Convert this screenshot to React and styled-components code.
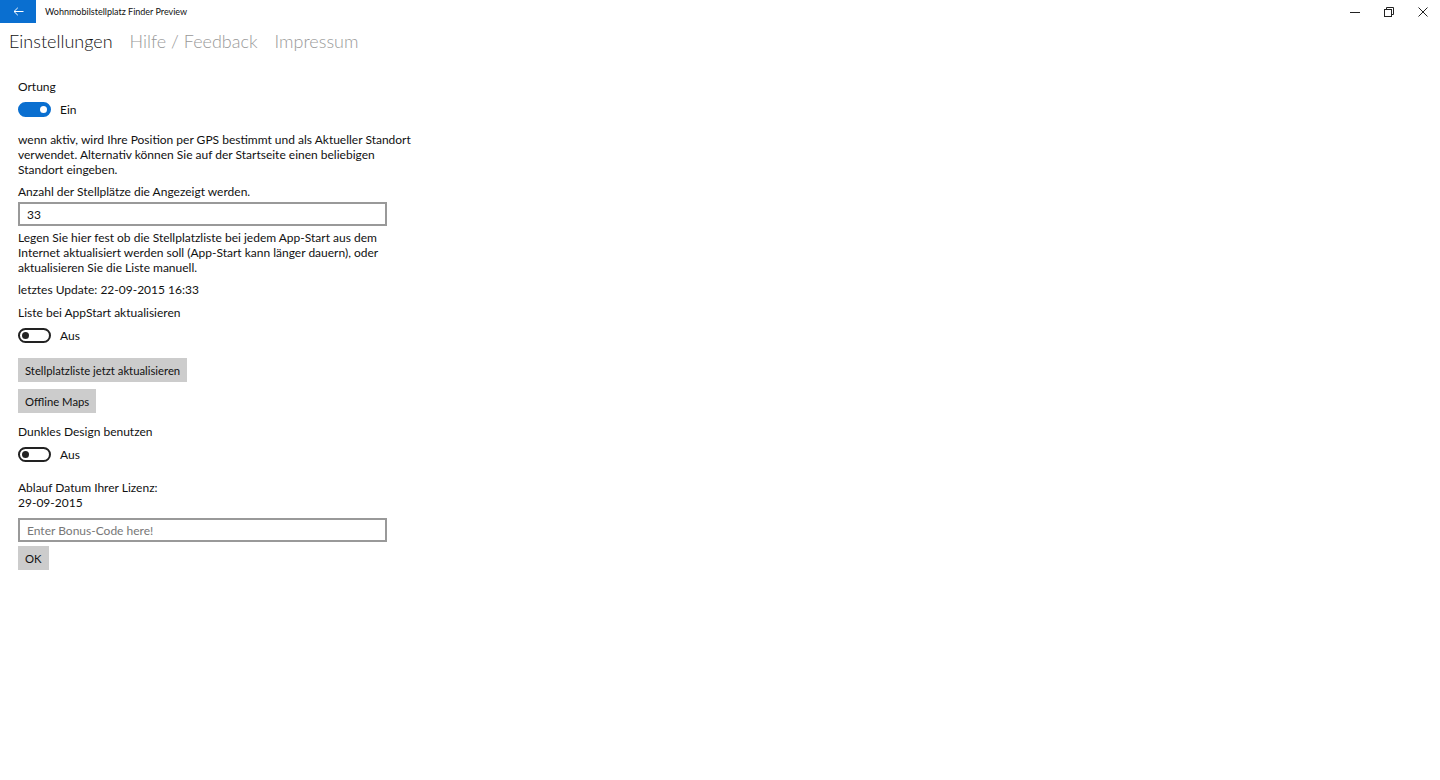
import styled, { createGlobalStyle } from "styled-components";
import { useState } from "react";

const GlobalStyle = createGlobalStyle`
  html, body {
    margin: 0;
    padding: 0;
    background: #fff;
    font-family: "Segoe UI", Lato, "Open Sans", sans-serif;
    color: #000;
  }
`;

const Window = styled.div`
  width: 1440px;
  height: 780px;
  background: #fff;
  display: flex;
  flex-direction: column;
  overflow: hidden;
`;

const TitleBar = styled.div`
  height: 23px;
  display: flex;
  align-items: center;
`;

const BackButton = styled.div`
  width: 36px;
  height: 23px;
  background: #0a6fd0;
  display: flex;
  align-items: center;
  justify-content: center;
`;

const Title = styled.div`
  margin-left: 9px;
  font-size: 9px;
  color: #111;
  flex: 1;
`;

const Controls = styled.div`
  display: flex;
  align-items: center;
  height: 23px;
`;

const ControlButton = styled.div`
  width: 34px;
  height: 23px;
  display: flex;
  align-items: center;
  justify-content: center;
`;

const Pivot = styled.div`
  display: flex;
  gap: 17px;
  padding: 7px 0 0 9px;
  height: 34px;
`;

const PivotItem = styled.div`
  font-size: 18px;
  font-weight: 300;
  color: ${(p) => (p.active ? "#111" : "#999")};
`;

const Content = styled.div`
  padding: 15px 0 0 18px;
  width: 400px;
  font-size: 12px;
  line-height: 15px;
  color: #111;
  display: flex;
  flex-direction: column;
`;

const Label = styled.div`
  margin-top: ${(p) => p.top || 0}px;
`;

const ToggleRow = styled.div`
  display: flex;
  align-items: center;
  gap: 9px;
  margin-top: 7px;
  height: 16px;
`;

const Track = styled.div`
  width: 33px;
  height: 15px;
  box-sizing: border-box;
  border-radius: 8px;
  border: 2px solid ${(p) => (p.on ? "#0a6fd0" : "#222")};
  background: ${(p) => (p.on ? "#0a6fd0" : "#fff")};
  display: flex;
  align-items: center;
  justify-content: ${(p) => (p.on ? "flex-end" : "flex-start")};
  padding: 0 2px;
`;

const Knob = styled.div`
  width: 7px;
  height: 7px;
  border-radius: 50%;
  background: ${(p) => (p.on ? "#fff" : "#222")};
`;

const Paragraph = styled.p`
  margin: ${(p) => p.top || 0}px 0 0;
`;

const TextBox = styled.input`
  margin-top: ${(p) => p.top || 0}px;
  width: 369px;
  height: 24px;
  box-sizing: border-box;
  border: 2px solid #999;
  padding: 0 7px;
  font-family: inherit;
  font-size: 12px;
  color: #111;
  outline: none;
  &::placeholder {
    color: #777;
  }
`;

const Button = styled.button`
  align-self: flex-start;
  margin-top: ${(p) => p.top || 0}px;
  height: 24px;
  padding: 0 7px;
  border: none;
  background: #ccc;
  font-family: inherit;
  font-size: 11.3px;
  color: #111;
`;

const Toggle = ({ on, label }) => (
  <ToggleRow>
    <Track on={on ? 1 : 0}>
      <Knob on={on ? 1 : 0} />
    </Track>
    <span>{label}</span>
  </ToggleRow>
);

export default function App() {
  const [count, setCount] = useState("33");
  const [code, setCode] = useState("");

  return (
    <Window>
      <GlobalStyle />
      <TitleBar>
        <BackButton>
          <svg width="11" height="9" viewBox="0 0 11 9" fill="none" stroke="#fff" strokeWidth="1">
            <path d="M10.5 4.5H1M4.8 0.8L1 4.5l3.8 3.7" />
          </svg>
        </BackButton>
        <Title>Wohnmobilstellplatz Finder Preview</Title>
        <Controls>
          <ControlButton>
            <svg width="10" height="10" viewBox="0 0 10 10" stroke="#222" strokeWidth="1">
              <path d="M0 5.5h10" />
            </svg>
          </ControlButton>
          <ControlButton>
            <svg width="10" height="10" viewBox="0 0 10 10" fill="none" stroke="#222" strokeWidth="1">
              <rect x="0.5" y="2.5" width="7" height="7" />
              <path d="M2.5 2.5V0.5h7v7H7.5" />
            </svg>
          </ControlButton>
          <ControlButton>
            <svg width="10" height="10" viewBox="0 0 10 10" stroke="#222" strokeWidth="1">
              <path d="M0.5 0.5l9 9M9.5 0.5l-9 9" />
            </svg>
          </ControlButton>
        </Controls>
      </TitleBar>

      <Pivot>
        <PivotItem active>Einstellungen</PivotItem>
        <PivotItem>Hilfe / Feedback</PivotItem>
        <PivotItem>Impressum</PivotItem>
      </Pivot>

      <Content>
        <Label>Ortung</Label>
        <Toggle on label="Ein" />
        <Paragraph top={15}>
          wenn aktiv, wird Ihre Position per GPS bestimmt und als Aktueller Standort
          verwendet. Alternativ können Sie auf der Startseite einen beliebigen
          Standort eingeben.
        </Paragraph>
        <Label top={7}>Anzahl der Stellplätze die Angezeigt werden.</Label>
        <TextBox top={3} value={count} onChange={(e) => setCount(e.target.value)} />
        <Paragraph top={4}>
          Legen Sie hier fest ob die Stellplatzliste bei jedem App-Start aus dem
          Internet aktualisiert werden soll (App-Start kann länger dauern), oder
          aktualisieren Sie die Liste manuell.
        </Paragraph>
        <Label top={7}>letztes Update: 22-09-2015 16:33</Label>
        <Label top={8}>Liste bei AppStart aktualisieren</Label>
        <Toggle label="Aus" />
        <Button top={15}>Stellplatzliste jetzt aktualisieren</Button>
        <Button top={7}>Offline Maps</Button>
        <Label top={11}>Dunkles Design benutzen</Label>
        <Toggle label="Aus" />
        <Label top={18}>Ablauf Datum Ihrer Lizenz:</Label>
        <Label>29-09-2015</Label>
        <TextBox
          top={8}
          placeholder="Enter Bonus-Code here!"
          value={code}
          onChange={(e) => setCode(e.target.value)}
        />
        <Button top={4}>OK</Button>
      </Content>
    </Window>
  );
}
